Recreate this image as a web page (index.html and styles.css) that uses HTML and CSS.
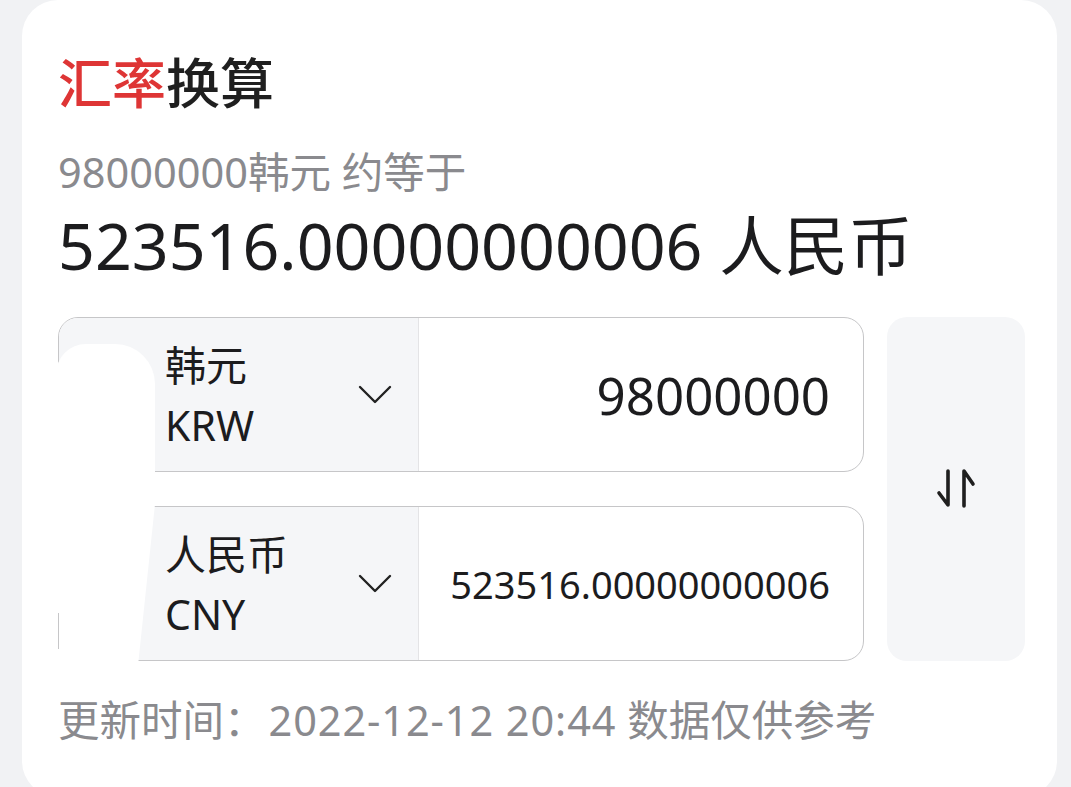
FILE: index.html
```html
<!DOCTYPE html>
<html lang="zh-CN">
<head>
<meta charset="utf-8">
<title>汇率换算</title>
<link rel="stylesheet" href="styles.css">
</head>
<body>
<div class="card">
  <h1 class="title"><span class="red">汇率</span>换算</h1>
  <div class="sub">98000000韩元 约等于</div>
  <div class="result">523516.00000000006 人民币</div>
  <div class="pair">
    <div class="rows">
      <div class="box">
        <div class="sel">
          <span class="redact r1"></span>
          <div class="names"><div>韩元</div><div>KRW</div></div>
          <svg class="chev" width="34" height="20" viewBox="0 0 34 20"><path d="M2 2 L17 17 L32 2" fill="none" stroke="#222" stroke-width="2.4" stroke-linecap="round" stroke-linejoin="round"/></svg>
        </div>
        <div class="val big">98000000</div>
      </div>
      <div class="box">
        <div class="sel">
          <span class="redact r2"></span>
          <span class="edge"></span>
          <div class="names"><div>人民币</div><div>CNY</div></div>
          <svg class="chev" width="34" height="20" viewBox="0 0 34 20"><path d="M2 2 L17 17 L32 2" fill="none" stroke="#222" stroke-width="2.4" stroke-linecap="round" stroke-linejoin="round"/></svg>
        </div>
        <div class="val small">523516.00000000006</div>
      </div>
    </div>
    <div class="swap">
      <svg width="44" height="44" viewBox="0 0 44 44"><path d="M14 4 V38 L5 26 M30 39 V4 L39 17" fill="none" stroke="#1f1f1f" stroke-width="3.6" stroke-linecap="round" stroke-linejoin="round"/></svg>
    </div>
  </div>
  <div class="foot">更新时间：<span class="date">2022-12-12 20:44</span> 数据仅供参考</div>
</div>
</body>
</html>
```
FILE: styles.css
```css
html, body {
  margin: 0;
  padding: 0;
  background: #f1f2f4;
  height: 787px;
  overflow: hidden;
}
body {
  font-family: "Noto Sans", "Noto Sans CJK SC", sans-serif;
  color: #1c1c1e;
}
.card {
  margin-left: 22px;
  width: 1035px;
  height: 797px;
  background: #ffffff;
  border-radius: 36px;
  box-sizing: border-box;
  padding: 49px 32px 0 36px;
}
.title {
  margin: 0;
  font-family: "Noto Sans CJK SC", sans-serif;
  font-size: 54px;
  line-height: 64px;
  font-weight: 500;
  color: #1f1f1f;
}
.red { color: #de3535; }
.sub {
  font-size: 41.5px;
  line-height: 48px;
  color: #8a8a8e;
  margin-top: 35px;
}
.result {
  font-size: 64.5px;
  line-height: 72px;
  color: #1c1c1e;
  margin-top: 13px;
}
.pair {
  display: flex;
  gap: 23px;
  margin-top: 36px;
}
.rows {
  display: flex;
  flex-direction: column;
  gap: 34px;
  width: 806px;
}
.box {
  position: relative;
  display: flex;
  height: 155px;
  box-sizing: border-box;
  border: 1.5px solid #c6c6c8;
  border-radius: 20px;
  background: #fff;
}
.sel {
  position: relative;
  display: flex;
  align-items: center;
  width: 359.5px;
  box-sizing: border-box;
  padding: 0 26px 0 106px;
  background: #f5f6f8;
  border-right: 1.5px solid #e4e4e6;
  border-radius: 19px 0 0 19px;
}
.names {
  flex: 1;
  font-size: 41px;
  line-height: 60px;
  color: #1c1c1e;
}
.chev { display: block; }
.val {
  flex: 1;
  text-align: right;
  padding-right: 33px;
  align-self: center;
  color: #1c1c1e;
}
.val.big { font-size: 51px; line-height: 60px; }
.val.small { font-size: 38px; line-height: 48px; }
.redact {
  position: absolute;
  background: #ffffff;
}
.r1 {
  left: -3px;
  top: 26px;
  width: 99px;
  height: 130px;
  border-radius: 30px 40px 0 0;
}
.r2 {
  left: -3px;
  top: -3px;
  width: 99px;
  height: 160px;
  clip-path: polygon(0 0, 100% 0, 83% 100%, 0 100%);
}
.edge {
  position: absolute;
  left: -1.5px;
  top: 106px;
  width: 1.5px;
  height: 36px;
  background: #c6c6c8;
}
.swap {
  width: 138px;
  height: 344px;
  background: #f5f6f8;
  border-radius: 20px;
  display: flex;
  align-items: center;
  justify-content: center;
}
.swap svg { display: block; }
.foot {
  font-size: 41.5px;
  line-height: 48px;
  color: #8a8a8e;
  margin-top: 35px;
}
.date {
  letter-spacing: 0.9px;
  margin-left: 3px;
}
```
